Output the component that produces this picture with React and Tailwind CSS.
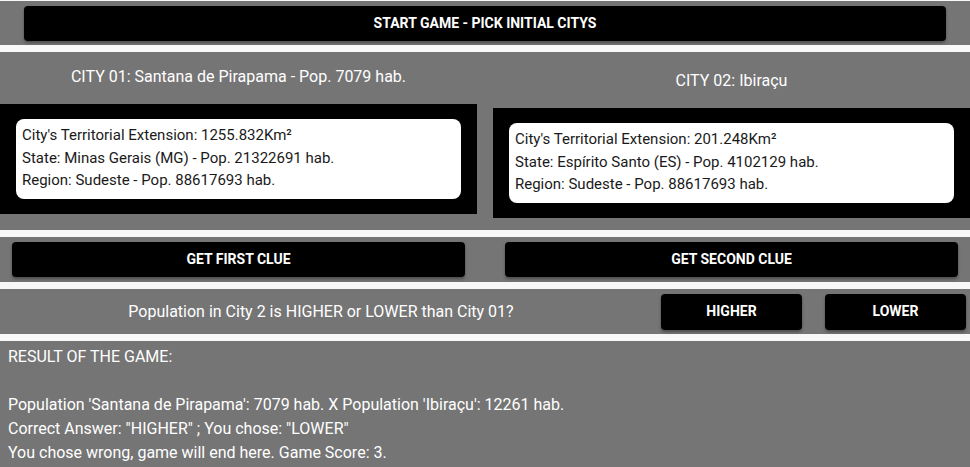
const font = { fontFamily: 'Roboto, "Liberation Sans", sans-serif' }

function Btn({ children, className = '' }) {
  return (
    <button
      className={`bg-black text-white font-bold text-[14px] uppercase rounded-[4px] shadow-[0_2px_3px_rgba(0,0,0,0.35)] flex items-center justify-center ${className}`}
    >
      {children}
    </button>
  )
}

function CityCard({ title, lines, titleClass, boxClass }) {
  return (
    <div className="flex-1 flex flex-col">
      <div className={`text-white text-[16px] text-center ${titleClass}`}>{title}</div>
      <div className={`bg-black ${boxClass}`}>
        <div className="bg-white rounded-[8px] h-[80px] px-[6px] pt-[5px] text-[15px] leading-[22.5px] text-[#1a1a1a]">
          {lines.map((l) => (
            <div key={l}>{l}</div>
          ))}
        </div>
      </div>
    </div>
  )
}

export default function App() {
  return (
    <div className="w-[970px] h-[467px] bg-[#f8f8f8] overflow-hidden" style={font}>
      {/* start */}
      <div className="bg-[#757575] h-[45px] pt-[5px] px-[24px] border-t border-[#f8f8f8]">
        <Btn className="w-full h-[35px]">Start Game - Pick Initial Citys</Btn>
      </div>

      {/* cities */}
      <div className="bg-[#757575] mt-[7px] h-[178px] flex gap-[16px]">
        <CityCard
          title="CITY 01: Santana de Pirapama - Pop. 7079 hab."
          titleClass="pt-[13px] h-[52px]"
          boxClass="h-[110px] pl-[16px] pr-[16px] pt-[15px]"
          lines={[
            "City's Territorial Extension: 1255.832Km²",
            'State: Minas Gerais (MG) - Pop. 21322691 hab.',
            'Region: Sudeste - Pop. 88617693 hab.',
          ]}
        />
        <CityCard
          title="CITY 02: Ibiraçu"
          titleClass="pt-[17px] h-[56px]"
          boxClass="h-[110px] pl-[16px] pr-[16px] pt-[15px]"
          lines={[
            "City's Territorial Extension: 201.248Km²",
            'State: Espírito Santo (ES) - Pop. 4102129 hab.',
            'Region: Sudeste - Pop. 88617693 hab.',
          ]}
        />
      </div>

      {/* clues */}
      <div className="bg-[#757575] mt-[7px] h-[45px] flex items-start pt-[5px]">
        <div className="w-[485px] px-[12px] pr-[20px]">
          <Btn className="w-full h-[35px]">Get First Clue</Btn>
        </div>
        <div className="w-[485px] pl-[20px] pr-[12px]">
          <Btn className="w-full h-[35px]">Get Second Clue</Btn>
        </div>
      </div>

      {/* question */}
      <div className="bg-[#757575] mt-[7px] h-[45px] flex items-center">
        <div className="w-[642px] text-center text-white text-[16px]">
          Population in City 2 is HIGHER or LOWER than City 01?
        </div>
        <Btn className="ml-[19px] w-[141px] h-[36px]">Higher</Btn>
        <Btn className="ml-[23px] w-[141px] h-[36px]">Lower</Btn>
      </div>

      {/* result */}
      <div className="bg-[#757575] mt-[7px] h-[200px] px-[8px] pt-[4px] text-white text-[16px] leading-[24px]">
        <div>RESULT OF THE GAME:</div>
        <div className="h-[24px]" />
        <div>Population 'Santana de Pirapama': 7079 hab. X Population 'Ibiraçu': 12261 hab.</div>
        <div>Correct Answer: "HIGHER" ; You chose: "LOWER"</div>
        <div>You chose wrong, game will end here. Game Score: 3.</div>
      </div>
    </div>
  )
}
